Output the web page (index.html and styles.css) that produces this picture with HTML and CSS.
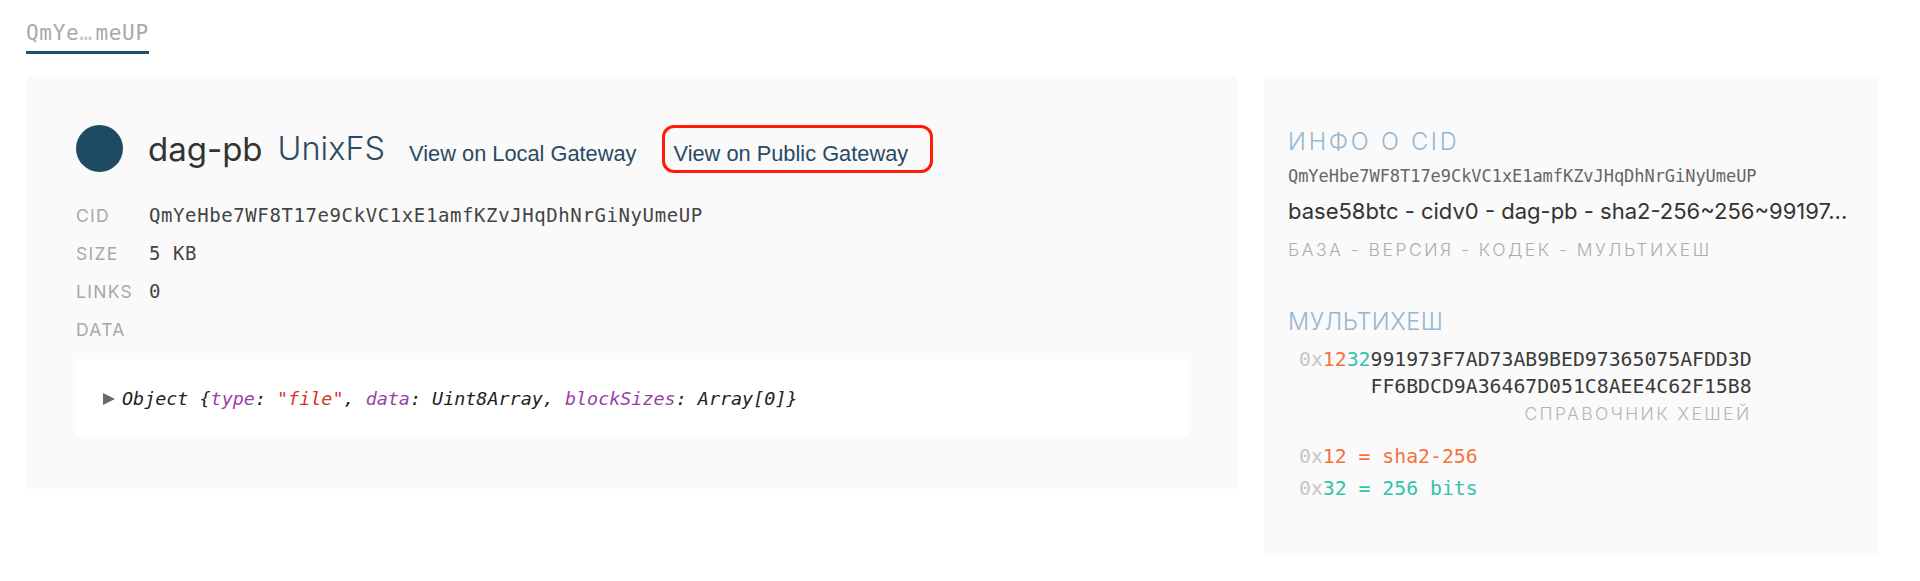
FILE: index.html
```html
<!DOCTYPE html>
<html lang="ru">
<head>
<meta charset="utf-8">
<title>QmYe…meUP</title>
<link rel="stylesheet" href="styles.css">
</head>
<body>
<div class="page">
  <nav class="tabs">
    <span class="tab">QmYe<span class="ell">…</span>meUP</span>
  </nav>
  <div class="main">
    <section class="obj-panel">
      <header class="obj-head">
        <span class="dot"></span>
        <span class="codec">dag-pb</span>
        <span class="ftype">UnixFS</span>
        <a class="gw gw-local" href="#">View on Local Gateway</a>
        <a class="gw gw-public" href="#">View on Public Gateway</a>
      </header>
      <div class="meta">
        <div class="meta-row"><span class="meta-label">CID</span><span class="meta-value">QmYeHbe7WF8T17e9CkVC1xE1amfKZvJHqDhNrGiNyUmeUP</span></div>
        <div class="meta-row"><span class="meta-label">Size</span><span class="meta-value">5 KB</span></div>
        <div class="meta-row"><span class="meta-label">Links</span><span class="meta-value">0</span></div>
        <div class="meta-row"><span class="meta-label">Data</span></div>
      </div>
      <div class="data-box">
        <span class="tri"></span><span class="obj-text">Object {<span class="prop">type</span>: <span class="str">"file"</span>, <span class="prop">data</span>: Uint8Array, <span class="prop">blockSizes</span>: Array[0]}</span>
      </div>
    </section>
    <aside class="cid-panel">
      <h2 class="cid-heading info-heading">Инфо о CID</h2>
      <div class="cid-hash">QmYeHbe7WF8T17e9CkVC1xE1amfKZvJHqDhNrGiNyUmeUP</div>
      <div class="cid-parts">base58btc - cidv0 - dag-pb - sha2-256~256~99197...</div>
      <div class="cid-legend">База - версия - кодек - мультихеш</div>
      <h2 class="cid-heading mh-heading">Мультихеш</h2>
      <div class="mh-block">
        <div class="mh-line"><span class="pfx">0x</span><span class="fn">12</span><span class="len">32</span>991973F7AD73AB9BED97365075AFDD3D</div>
        <div class="mh-line">FF6BDCD9A36467D051C8AEE4C62F15B8</div>
        <div class="mh-ref">Справочник хешей</div>
      </div>
      <div class="mh-defs">
        <div class="mh-def fn"><span class="pfx">0x</span>12 = sha2-256</div>
        <div class="mh-def len"><span class="pfx">0x</span>32 = 256 bits</div>
      </div>
    </aside>
  </div>
</div>
</body>
</html>
```

FILE: styles.css
```css
html, body {
  margin: 0;
  padding: 0;
  background: #ffffff;
}

body {
  font-family: Inter, "Noto Sans", sans-serif;
  color: #333333;
}

.page {
  padding: 21px 0 0 26px;
}

.tabs {
  display: flex;
}

.tab {
  display: inline-block;
  font-family: "DejaVu Sans Mono", monospace;
  font-size: 21px;
  line-height: 24px;
  letter-spacing: 0.7px;
  color: #a9a9a9;
  padding-bottom: 6px;
  border-bottom: 3px solid #244f6b;
  width: 123px;
  white-space: nowrap;
  overflow: hidden;
}

.tab .ell {
  letter-spacing: 3.4px;
  color: #c8c8c8;
}

.main {
  display: flex;
  align-items: flex-start;
  gap: 27px;
  margin-top: 22px;
  margin-left: 1px;
}

.obj-panel {
  flex: 0 0 1210px;
  box-sizing: border-box;
  background: #fafafa;
  padding: 48.5px 49px 52px 49px;
}

.obj-head {
  display: flex;
  align-items: center;
  height: 48px;
}

.dot {
  flex: 0 0 47px;
  width: 47px;
  height: 47px;
  border-radius: 50%;
  background: #1f4a63;
  margin-right: 25px;
}

.codec {
  font-size: 33px;
  line-height: 38px;
  color: #333333;
  margin-right: 15px;
  font-weight: 400;
}

.ftype {
  font-size: 32.5px;
  line-height: 38px;
  color: #2d4a64;
  font-weight: 300;
  margin-right: 24px;
}

.gw {
  font-family: "Liberation Sans", Arial, sans-serif;
  font-size: 21.8px;
  line-height: 25px;
  color: #2a4a63;
  text-decoration: none;
  white-space: nowrap;
}

.gw-local {
  padding: 16px 0 7px 0;
  margin-right: 25px;
}

.gw-public {
  border: 3px solid #ff1a0a;
  border-radius: 12px;
  padding: 13px 22px 4px 9px;
}

.meta {
  margin-top: 23.5px;
}

.meta-row {
  display: flex;
  align-items: center;
  height: 38px;
}

.meta-label {
  flex: 0 0 73px;
  font-size: 17.5px;
  letter-spacing: 1.3px;
  text-transform: uppercase;
  color: #a8a8a8;
  font-weight: 400;
  white-space: nowrap;
}

.meta-value {
  font-family: "DejaVu Sans Mono", monospace;
  font-size: 19px;
  letter-spacing: 0.6px;
  color: #444444;
}

.data-box {
  margin-top: 11px;
  height: 78px;
  background: #ffffff;
  display: flex;
  align-items: center;
  padding: 0 27px;
}

.tri {
  width: 0;
  height: 0;
  border-top: 6.5px solid transparent;
  border-bottom: 6.5px solid transparent;
  border-left: 12px solid #6a6a6a;
  margin-right: 7px;
  margin-top: 1px;
}

.obj-text {
  font-family: "DejaVu Sans Mono", monospace;
  font-style: italic;
  font-size: 18.4px;
  color: #222222;
}

.obj-text .prop {
  color: #9a3fa8;
}

.obj-text .str {
  color: #d2382c;
}

.cid-panel {
  flex: 0 0 614px;
  box-sizing: border-box;
  background: #fafafa;
  padding: 51.5px 24px 51px 24px;
}

.cid-heading {
  margin: 0;
  font-size: 23.5px;
  line-height: 28px;
  font-weight: 300;
  text-transform: uppercase;
  color: #95b6cf;
  white-space: nowrap;
}

.info-heading {
  letter-spacing: 2.8px;
}

.cid-hash {
  margin-top: 8.5px;
  font-family: "DejaVu Sans Mono", monospace;
  font-size: 17px;
  line-height: 24px;
  color: #666666;
  letter-spacing: -0.05px;
}

.cid-parts {
  margin-top: 9px;
  font-size: 22px;
  line-height: 28px;
  color: #333333;
  white-space: nowrap;
}

.cid-legend {
  margin-top: 13px;
  font-size: 17.5px;
  line-height: 24px;
  letter-spacing: 2.5px;
  text-transform: uppercase;
  color: #adadad;
  font-weight: 300;
  white-space: nowrap;
}

.mh-heading {
  margin-top: 45.5px;
  letter-spacing: 0.5px;
}

.mh-block {
  display: inline-block;
  margin-top: 10.5px;
  margin-left: 11px;
  text-align: right;
}

.mh-line {
  font-family: "DejaVu Sans Mono", monospace;
  font-size: 19.8px;
  line-height: 27px;
  color: #3a3a3a;
  white-space: nowrap;
}

.pfx {
  color: #c3c6cb;
}

.fn {
  color: #f3733d;
}

.len {
  color: #32c3a9;
}

.mh-ref {
  font-size: 17.5px;
  line-height: 27px;
  letter-spacing: 2.4px;
  text-transform: uppercase;
  color: #b5b5b5;
  font-weight: 300;
  white-space: nowrap;
}

.mh-defs {
  margin-top: 14px;
  margin-left: 11px;
}

.mh-def {
  font-family: "DejaVu Sans Mono", monospace;
  font-size: 19.8px;
  line-height: 32px;
  white-space: nowrap;
}
```
